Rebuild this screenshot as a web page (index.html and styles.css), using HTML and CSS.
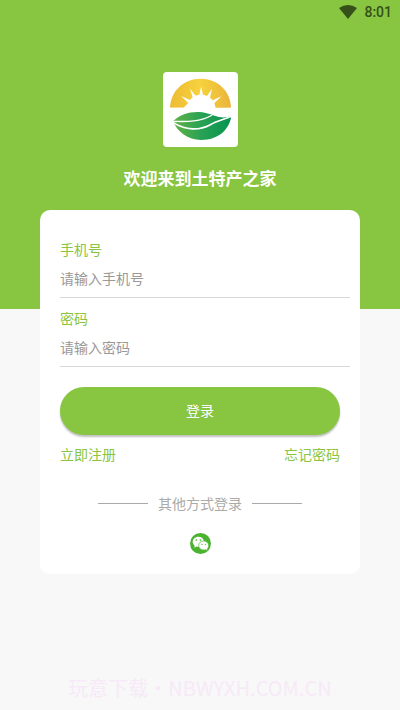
FILE: index.html
```html
<!DOCTYPE html>
<html lang="zh-CN">
<head>
<meta charset="utf-8">
<meta name="viewport" content="width=device-width, initial-scale=1">
<title>登录</title>
<link rel="stylesheet" href="styles.css">
</head>
<body>
<header class="hero">
  <div class="status">
    <svg class="wifi" viewBox="0 0 18 15" aria-hidden="true"><path d="M0 3Q9-3 18 3L9 14Z"/></svg>
    <time>8:01</time>
  </div>
  <svg class="logo" viewBox="36 36 225 225" aria-hidden="true">
    <defs>
      <linearGradient id="sun" x1="0" y1="0" x2="1" y2="0"><stop offset="0" stop-color="#eebb35"/><stop offset=".5" stop-color="#f6d23c"/><stop offset="1" stop-color="#e9b43c"/></linearGradient>
      <linearGradient id="leaf" x1="0" y1="0" x2="1" y2="0"><stop offset="0" stop-color="#62b246"/><stop offset=".5" stop-color="#27a154"/><stop offset="1" stop-color="#079350"/></linearGradient>
    </defs>
    <path fill="url(#sun)" d="M57 143C59 92 98 56 149 56S238 92 240 143Z"/>
    <path fill="#fff" d="M93 148 112 129 90 108 117 120Q119 117 125 112L117 86 134 107Q139 104 145 104L150 80 156 104Q163 105 168 108L183 86 177 113Q183 117 185 121L211 109 190 130Q193 138 194 146Z"/>
    <path fill="#fff" d="M55 143H114Q150 136 183 145L245 143V158H55Z"/>
    <path fill="url(#leaf)" d="M66 184C88 163 113 155 144 156C174 157 190 170 212 172Q228 173 241 168C236 207 203 240 151 240C109 240 80 216 66 184Z"/>
    <path fill="none" stroke="#fff" stroke-width="4" d="M64 184C108 185 145 187 184 165"/>
    <path fill="none" stroke="#fff" stroke-width="5" d="M66 187C104 212 145 212 178 194C200 181 220 178 243 168"/>
  </svg>
  <h1 class="title">欢迎来到土特产之家</h1>
</header>
<main class="card">
  <form>
    <div class="fields">
      <div class="field">
        <label for="phone">手机号</label>
        <input id="phone" type="tel" placeholder="请输入手机号">
      </div>
      <div class="field">
        <label for="password">密码</label>
        <input id="password" type="password" placeholder="请输入密码">
      </div>
    </div>
    <button class="submit" type="submit">登录</button>
  </form>
  <nav class="links"><a href="#register">立即注册</a><a href="#forgot">忘记密码</a></nav>
  <div class="divider">其他方式登录</div>
  <button class="wechat" type="button" aria-label="微信登录">
    <svg viewBox="0 0 63 63" aria-hidden="true">
      <circle cx="31.500" cy="31.500" r="31.500" fill="#4bb32f"/>
      <path fill="#fff" d="M25 11C15 11 8 18 8 26.500C8 31 10 35 14 38L13 44 20 40.500Q24 42 29 41.500C43 41 43 30 42 25C41 17 34 11 25 11Z"/>
      <path fill="#fff" stroke="#4bb32f" stroke-width="2" d="M41 24C32 24 26 30 26 37.500S32 51 41 51Q45 51 47 50L53 53 52 47C55 45 56 41 56 38C56 30 49 24 41 24Z"/>
      <g fill="#4bb32f"><circle cx="19" cy="21" r="2.500"/><circle cx="31" cy="21" r="2.500"/><circle cx="36" cy="34" r="2"/><circle cx="46" cy="34" r="2"/></g>
    </svg>
  </button>
</main>
<footer class="mark">玩意下载・NBWYXH.COM.CN</footer>
</body>
</html>
```
FILE: styles.css
```css
* {
  box-sizing: border-box;
}

body {
  display: flex;
  flex-direction: column;
  min-height: 100vh;
  margin: 0;
  background: #f8f8f8;
  color: #88c540;
  font: 14px/20px "Noto Sans CJK SC", sans-serif;
}

.hero {
  display: flex;
  flex-direction: column;
  align-items: center;
  padding-bottom: 119px;
  background: #88c540;
}

.status {
  display: flex;
  align-self: stretch;
  align-items: center;
  justify-content: flex-end;
  gap: 7px;
  height: 24px;
  padding-right: 8px;
  color: #36501a;
  font: 500 14px/24px Roboto, sans-serif;
}

.wifi {
  width: 18px;
  height: 15px;
  fill: currentColor;
}

.logo {
  width: 75px;
  height: 75px;
  margin-top: 48px;
  border-radius: 4px;
  background: #fff;
}

.title {
  margin: 19px 0 0;
  color: #fff;
  font-size: 17px;
  font-weight: 700;
  line-height: 24px;
}

.card {
  margin: -99px 40px 0;
  padding: 29px 20px 20px;
  border-radius: 10px;
  background: #fff;
}

.fields {
  display: grid;
  gap: 10px;
  margin-right: -10px;
}

.field label {
  display: block;
}

.field input {
  display: block;
  width: 100%;
  height: 39px;
  padding: 0;
  border: 0;
  border-bottom: 1px solid #d8d8d8;
  border-radius: 0;
  outline: 0;
  background: none;
  color: #333;
  font: inherit;
}

.field input::placeholder {
  color: #999;
  opacity: 1;
}

.submit {
  display: block;
  width: 100%;
  height: 48px;
  margin-top: 20px;
  padding: 0 0 2px;
  border: 0;
  border-radius: 24px;
  background: #88c540;
  box-shadow: 0 2px 2px rgba(0, 0, 0, 0.25);
  color: #fff;
  font: inherit;
}

.links {
  display: flex;
  justify-content: space-between;
  margin-top: 9px;
}

.links a {
  color: inherit;
  text-decoration: none;
}

.divider {
  display: flex;
  align-items: center;
  justify-content: center;
  gap: 10px;
  margin-top: 29px;
  color: #aaa;
}

.divider::before,
.divider::after {
  width: 50px;
  height: 1px;
  background: #aaa;
  content: "";
}

.wechat {
  display: block;
  width: 21px;
  height: 21px;
  margin: 20px auto 0;
  padding: 0;
  border: 0;
  border-radius: 50%;
  background: none;
}

.wechat svg {
  display: block;
}

.mark {
  margin-top: auto;
  padding-bottom: 10px;
  color: #f7e9f7;
  font-size: 20px;
  font-weight: 400;
  line-height: 24px;
  text-align: center;
}
```
